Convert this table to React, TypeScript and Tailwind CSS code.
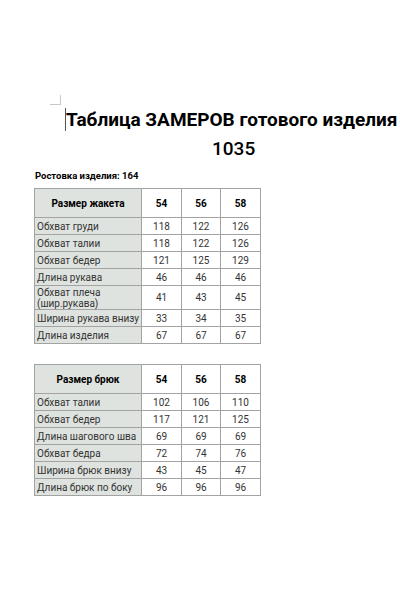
import React from "react";

const jacket = [
  ["Обхват груди", "118", "122", "126"],
  ["Обхват талии", "118", "122", "126"],
  ["Обхват бедер", "121", "125", "129"],
  ["Длина рукава", "46", "46", "46"],
  ["Обхват плеча\n(шир.рукава)", "41", "43", "45"],
  ["Ширина рукава внизу", "33", "34", "35"],
  ["Длина изделия", "67", "67", "67"],
];

const pants = [
  ["Обхват талии", "102", "106", "110"],
  ["Обхват бедер", "117", "121", "125"],
  ["Длина шагового шва", "69", "69", "69"],
  ["Обхват бедра", "72", "74", "76"],
  ["Ширина брюк внизу", "43", "45", "47"],
  ["Длина брюк по боку", "96", "96", "96"],
];

function SizeTable({ title, rows }: { title: string; rows: string[][] }) {
  return (
    <table className="border-collapse table-fixed w-[226px] text-[10px] leading-[11px] text-[#333]">
      <colgroup>
        <col className="w-[107px]" />
        <col className="w-[40px]" />
        <col className="w-[39px]" />
        <col className="w-[40px]" />
      </colgroup>
      <thead>
        <tr className="h-[29px]">
          <th className="border border-[#a3a3a3] bg-[#dfe3df] font-bold text-black text-center">
            {title}
          </th>
          {["54", "56", "58"].map((s) => (
            <th key={s} className="border border-[#a3a3a3] bg-white font-bold text-black text-center">
              {s}
            </th>
          ))}
        </tr>
      </thead>
      <tbody>
        {rows.map((r) => (
          <tr key={r[0]} className={r[0].includes("\n") ? "h-[24px]" : "h-[17px]"}>
            <td className="border border-[#a3a3a3] bg-[#dfe3df] px-[2px] text-left whitespace-pre">
              {r[0]}
            </td>
            {r.slice(1).map((v, i) => (
              <td key={i} className="border border-[#a3a3a3] bg-white text-center">
                {v}
              </td>
            ))}
          </tr>
        ))}
      </tbody>
    </table>
  );
}

export default function App() {
  return (
    <div className="w-[400px] h-[600px] bg-white font-['Roboto',sans-serif] relative overflow-hidden">
      {/* page corner mark + text cursor */}
      <div className="absolute left-[50px] top-[95px] w-[11px] h-[10px] border-r border-b border-[#c8c8c8]"></div>
      <div className="absolute left-[65px] top-[108px] w-px h-[23px] bg-[#555]"></div>

      <div className="pt-[106px] pl-[66px]">
        <h1 className="text-[19px] leading-[27px] font-bold text-black whitespace-nowrap">
          Таблица ЗАМЕРОВ готового изделия
        </h1>
        <p className="text-[19px] leading-[26px] font-medium text-black pl-[146px] mt-[3px]">
          1035
        </p>
      </div>

      <div className="pl-[35px] mt-[7px]">
        <p className="text-[9.5px] leading-[14px] font-bold text-black">Ростовка изделия: 164</p>
        <div className="mt-[5px] -ml-px">
          <SizeTable title="Размер жакета" rows={jacket} />
        </div>
        <div className="mt-[20px] -ml-px">
          <SizeTable title="Размер брюк" rows={pants} />
        </div>
      </div>
    </div>
  );
}
